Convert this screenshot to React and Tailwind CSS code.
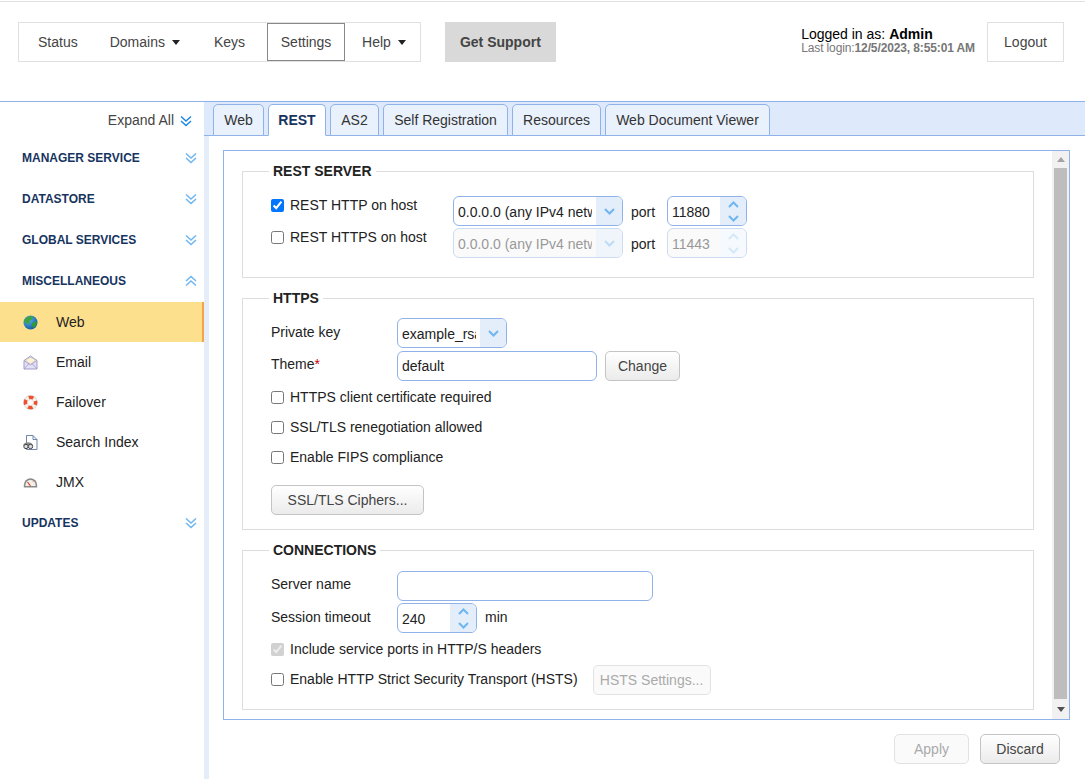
import { useState } from "react";

const sections = ["MANAGER SERVICE", "DATASTORE", "GLOBAL SERVICES"];
const tabs = [
  { label: "Web", width: "w-[51px]" },
  { label: "REST", width: "w-[58px]" },
  { label: "AS2", width: "w-[49px]" },
  { label: "Self Registration", width: "w-[125px]" },
  { label: "Resources", width: "w-[89px]" },
  { label: "Web Document Viewer", width: "w-[165px]" },
];

function Caret() {
  return <span className="ml-[7px] inline-block h-0 w-0 border-x-[4.5px] border-t-[5px] border-x-transparent border-t-[#222]" />;
}

function DoubleChevron({ up, color = "#6db6f2" }) {
  return (
    <svg width="12" height="12" viewBox="0 0 12 12" fill="none" stroke={color} strokeWidth="1.5">
      {up ? (
        <>
          <path d="M1 6 L6 1.5 L11 6" />
          <path d="M1 10.5 L6 6 L11 10.5" />
        </>
      ) : (
        <>
          <path d="M1 1.5 L6 6 L11 1.5" />
          <path d="M1 6 L6 10.5 L11 6" />
        </>
      )}
    </svg>
  );
}

function Chevron({ up, color = "#6db6f2" }) {
  return (
    <svg width="11" height="7" viewBox="0 0 11 7" fill="none" stroke={color} strokeWidth="2">
      <path d={up ? "M1 6 L5.5 1.5 L10 6" : "M1 1 L5.5 5.5 L10 1"} />
    </svg>
  );
}

function GlobeIcon() {
  return (
    <svg width="15" height="15" viewBox="0 0 15 15">
      <defs>
        <radialGradient id="sea" cx="35%" cy="30%" r="75%">
          <stop offset="0%" stopColor="#5fb4ee" />
          <stop offset="100%" stopColor="#0f5a9e" />
        </radialGradient>
      </defs>
      <circle cx="7.5" cy="7.5" r="7" fill="url(#sea)" />
      <path d="M4 2.2 C6 1 8.5 1 10 2 L9 4.5 L6.5 6 L6.5 9 L4 8.5 L1.2 7 C1.3 5 2.5 3.2 4 2.2Z" fill="#3da33c" />
      <path d="M9 8 L13.6 6.5 L14 9 L11 13 L9 11Z" fill="#2f9a3a" />
    </svg>
  );
}

function MailIcon() {
  return (
    <svg width="15" height="15" viewBox="0 0 15 15" fill="none">
      <path d="M1 5.5 L7.5 1 L14 5.5 V14 H1Z" fill="#e4e0f5" stroke="#a19cc9" />
      <path d="M3 6 L3 4.5 L7.5 2.5 L12 4.5 L12 6 L7.5 9Z" fill="#fbf2d8" stroke="#c9bfa0" strokeWidth="0.6" />
      <path d="M1 14 L6 8.5 M14 14 L9 8.5 M1 5.5 L7.5 10 L14 5.5" stroke="#a19cc9" strokeWidth="0.8" />
    </svg>
  );
}

function BuoyIcon() {
  return (
    <svg width="15" height="15" viewBox="0 0 15 15" fill="none">
      <circle cx="7.5" cy="7.5" r="7" fill="#f4f1ec" stroke="#c9c4bd" strokeWidth="0.6" />
      <circle cx="7.5" cy="7.5" r="5" stroke="#ee4f2c" strokeWidth="3.6" strokeDasharray="4.6 3.25" strokeDashoffset="2.3" />
      <circle cx="7.5" cy="7.5" r="2.9" fill="#fff" stroke="#d8cfc6" strokeWidth="0.5" />
    </svg>
  );
}

function SearchDocIcon() {
  return (
    <svg width="15" height="15" viewBox="0 0 15 15" fill="none">
      <path d="M3.5 0.5 H10 L14 4.5 V14.5 H3.5Z" fill="#fff" stroke="#6f86a8" />
      <path d="M10 0.5 V4.5 H14" stroke="#6f86a8" />
      <path d="M0.5 9.5 C2 6.5 8 6.5 9.5 9.5 L9.5 11 L0.5 11Z" fill="#8a8a8a" />
      <circle cx="3" cy="11.5" r="2.2" fill="#d8dde2" stroke="#444" />
      <circle cx="7.5" cy="11.5" r="2.2" fill="#d8dde2" stroke="#444" />
    </svg>
  );
}

function GaugeIcon() {
  return (
    <svg width="15" height="15" viewBox="0 0 15 15" fill="none">
      <path d="M0.8 12.5 V10 A6.7 6.7 0 0 1 14.2 10 V12.5 Z" fill="#8b8b8b" />
      <path d="M2.4 11 V10 A5.1 5.1 0 0 1 12.6 10 V11 Z" fill="#f3f0ea" />
      <path d="M7.5 11 L4.5 7" stroke="#d9432a" strokeWidth="1.2" />
      <path d="M10 6.5 L11 5.5" stroke="#d9432a" strokeWidth="0.8" />
    </svg>
  );
}

const miscItems = [
  { label: "Web", icon: GlobeIcon, active: true },
  { label: "Email", icon: MailIcon },
  { label: "Failover", icon: BuoyIcon },
  { label: "Search Index", icon: SearchDocIcon },
  { label: "JMX", icon: GaugeIcon },
];

function SectionHead({ title, up }) {
  return (
    <div className="flex h-[41px] items-center justify-between pr-[7px] pl-[22px]">
      <span className="text-[12px] font-bold text-[#17345f]">{title}</span>
      <DoubleChevron up={up} />
    </div>
  );
}

function Sidebar() {
  return (
    <aside className="w-[204px] shrink-0 bg-white">
      <div className="flex h-[35px] items-center justify-end pt-[2px] pr-[12px] text-[14px] text-[#444]">
        Expand All
        <span className="ml-[6px] flex">
          <DoubleChevron color="#1e88e5" />
        </span>
      </div>
      {sections.map((s) => (
        <SectionHead key={s} title={s} />
      ))}
      <SectionHead title="MISCELLANEOUS" up />
      <div className="mt-px">
        {miscItems.map((item) => {
          const Icon = item.icon;
          return (
            <div
              key={item.label}
              className={`flex h-[40px] items-center pl-[23px] text-[14px] text-[#222] ${item.active ? "border-r-[2px] border-[#f5a44a] bg-[#fde08d]" : ""}`}
            >
              <span className="mr-[18px] flex w-[15px]">
                <Icon />
              </span>
              {item.label}
            </div>
          );
        })}
      </div>
      <SectionHead title="UPDATES" />
    </aside>
  );
}

function Tabs() {
  const [active, setActive] = useState("REST");
  return (
    <div className="flex h-[34px] shrink-0 items-end gap-[4px] border-b border-[#8fb3e8] bg-[#deeafc] pl-[9px]">
      {tabs.map((t) => (
        <button
          key={t.label}
          onClick={() => setActive(t.label)}
          className={`-mb-px h-[32px] rounded-t-[5px] border border-[#8fb3e8] text-[14px] ${t.width} ${active === t.label ? "border-b-white bg-white font-bold text-[#17345f]" : "bg-[#e9f1fd] text-[#333]"}`}
        >
          {t.label}
        </button>
      ))}
    </div>
  );
}

function Section({ title, className, children }) {
  return (
    <fieldset className={`border border-[#dddddd] px-[28px] ${className}`}>
      <legend className="-ml-[2px] px-[4px] text-[14px] leading-[16px] font-bold text-[#222]">{title}</legend>
      {children}
    </fieldset>
  );
}

function Check({ label, checked, disabled, className = "" }) {
  return (
    <label className={`flex items-center text-[14px] ${className}`}>
      <input type="checkbox" defaultChecked={checked} disabled={disabled} className="m-0 mr-[6px] h-[13px] w-[13px]" />
      {label}
    </label>
  );
}

function SelectBox({ value, width, disabled }) {
  return (
    <div className={`flex h-[30px] overflow-hidden rounded-[6px] border ${disabled ? "border-[#ccdcf3] bg-[#fafafa] text-[#999]" : "border-[#8fb3e8] bg-white text-[#222]"} ${width}`}>
      <div className="min-w-0 flex-1 pr-[4px] pl-[4px]">
        <span className="block overflow-hidden text-[14px] leading-[30px] whitespace-nowrap">{value}</span>
      </div>
      <span className={`flex w-[26px] shrink-0 items-center justify-center ${disabled ? "bg-[#f0f5fc]" : "bg-[#e4eefb]"}`}>
        <Chevron color={disabled ? "#bcdcf6" : "#6db6f2"} />
      </span>
    </div>
  );
}

function Spinner({ value, disabled, className = "" }) {
  return (
    <div className={`flex h-[30px] w-[80px] overflow-hidden rounded-[6px] border ${disabled ? "border-[#ccdcf3] bg-[#fafafa] text-[#999]" : "border-[#8fb3e8] bg-white text-[#222]"} ${className}`}>
      <span className="flex-1 pl-[4px] text-[14px] leading-[30px]">{value}</span>
      <span className={`flex w-[26px] shrink-0 flex-col items-center justify-center gap-[7px] ${disabled ? "bg-[#f6f9fd]" : "bg-[#e4eefb]"}`}>
        <Chevron up color={disabled ? "#d4e8f8" : "#6db6f2"} />
        <Chevron color={disabled ? "#d4e8f8" : "#6db6f2"} />
      </span>
    </div>
  );
}

function Btn({ children, disabled, className = "" }) {
  return (
    <button
      disabled={disabled}
      className={`h-[30px] rounded-[5px] border text-[14px] ${disabled ? "border-[#e2e2e2] bg-[#fafafa] text-[#aaa]" : "border-[#c4c4c4] bg-gradient-to-b from-white to-[#ebebeb] text-[#444]"} ${className}`}
    >
      {children}
    </button>
  );
}

function Scrollbar() {
  return (
    <div className="flex w-[17px] shrink-0 flex-col items-center bg-[#f1f1f1]">
      <div className="flex h-[17px] w-full items-center justify-center">
        <span className="h-0 w-0 border-x-[4px] border-b-[5px] border-x-transparent border-b-[#a3a3a3]" />
      </div>
      <div className="w-[13px] flex-1 bg-[#bdbdbd]" />
      <div className="flex h-[20px] w-full items-center justify-center">
        <span className="h-0 w-0 border-x-[4px] border-t-[5px] border-x-transparent border-t-[#505050]" />
      </div>
    </div>
  );
}

export default function App() {
  return (
    <div className="flex h-screen flex-col overflow-hidden bg-white font-['Liberation_Sans',Arial,sans-serif] text-[#222]">
      <header className="mt-px flex h-[101px] shrink-0 items-start border-t border-b border-t-[#e2e2e2] border-b-[#8fb3e8] pt-[20px] pl-[18px]">
        <nav className="flex h-[40px] items-center border border-[#e0e0e0] text-[14px] text-[#444]">
          <a className="pr-[13px] pl-[19px]">Status</a>
          <a className="flex items-center pr-[15px] pl-[19px]">
            Domains
            <Caret />
          </a>
          <a className="pr-[22px] pl-[19px]">Keys</a>
          <a className="flex h-[38px] w-[78px] items-center justify-center border border-[#888]">Settings</a>
          <a className="flex items-center pr-[14px] pl-[17px]">
            Help
            <Caret />
          </a>
        </nav>
        <button className="ml-[24px] h-[40px] w-[111px] bg-[#d9d9d9] text-[14px] font-bold text-[#444]">Get Support</button>
        <div className="ml-auto pt-[5px] text-[14px] leading-[15px] text-black">
          <p>
            Logged in as: <b>Admin</b>
          </p>
          <p className="text-[12px] leading-[12px] tracking-[-0.12px] text-[#777]">
            Last login:<b>12/5/2023, 8:55:01 AM</b>
          </p>
        </div>
        <button className="mr-[21px] ml-[12px] h-[40px] w-[77px] border border-[#e0e0e0] text-[14px] text-[#444]">Logout</button>
      </header>

      <div className="flex min-h-0 flex-1">
        <Sidebar />
        <main className="flex min-w-0 flex-1 flex-col">
          <Tabs />
          <div className="flex flex-1 flex-col border-l-[5px] border-[#e5edf9] pt-[14px] pr-[15px] pl-[14px]">
            <div className="flex h-[570px] border border-[#8fb3e8] pl-[18px]">
              <div className="flex flex-1 flex-col gap-[12px] pt-[12px] pr-[18px]">
                <Section title="REST SERVER" className="h-[115px]">
                  <div className="flex pt-[17px]">
                    <div className="flex w-[182px] flex-col gap-[16px] pt-[1px]">
                      <Check label="REST HTTP on host" checked className="h-[16px]" />
                      <Check label="REST HTTPS on host" className="h-[16px]" />
                    </div>
                    <div className="flex flex-col gap-[2px]">
                      <div className="flex items-center">
                        <SelectBox value="0.0.0.0 (any IPv4 network)" width="w-[170px]" />
                        <span className="mx-[8px] w-[28px] pt-[2px] text-[14px]">port</span>
                        <Spinner value="11880" />
                      </div>
                      <div className="flex items-center">
                        <SelectBox value="0.0.0.0 (any IPv4 network)" width="w-[170px]" disabled />
                        <span className="mx-[8px] w-[28px] pt-[2px] text-[14px]">port</span>
                        <Spinner value="11443" disabled />
                      </div>
                    </div>
                  </div>
                </Section>

                <Section title="HTTPS" className="h-[240px]">
                  <div className="flex items-center pt-[12px]">
                    <span className="w-[126px] pb-[2px] text-[14px]">Private key</span>
                    <SelectBox value="example_rsa_key" width="w-[110px]" />
                  </div>
                  <div className="mt-[3px] flex items-center">
                    <span className="w-[126px] pb-[4px] text-[14px]">
                      Theme<span className="text-[#c00]">*</span>
                    </span>
                    <input defaultValue="default" className="h-[30px] w-[200px] rounded-[6px] border border-[#8fb3e8] pl-[4px] text-[14px] text-[#222]" />
                    <Btn className="ml-[8px] w-[75px]">Change</Btn>
                  </div>
                  <Check label="HTTPS client certificate required" className="mt-[6px] h-[20px]" />
                  <Check label="SSL/TLS renegotiation allowed" className="mt-[10px] h-[20px]" />
                  <Check label="Enable FIPS compliance" className="mt-[10px] h-[20px]" />
                  <Btn className="mt-[18px] w-[153px]">SSL/TLS Ciphers...</Btn>
                </Section>

                <Section title="CONNECTIONS" className="h-[168px]">
                  <div className="flex items-center pt-[13px]">
                    <span className="w-[126px] pb-[4px] text-[14px]">Server name</span>
                    <input className="h-[30px] w-[256px] rounded-[6px] border border-[#8fb3e8]" />
                  </div>
                  <div className="mt-[2px] flex items-center">
                    <span className="w-[126px] pb-[2px] text-[14px]">Session timeout</span>
                    <Spinner value="240" />
                    <span className="ml-[8px] pb-[2px] text-[14px]">min</span>
                  </div>
                  <Check label="Include service ports in HTTP/S headers" checked disabled className="mt-[6px] h-[20px]" />
                  <div className="mt-[6px] flex items-center">
                    <Check label="Enable HTTP Strict Security Transport (HSTS)" className="h-[30px] pb-[2px]" />
                    <Btn disabled className="ml-[15px] w-[118px]">HSTS Settings...</Btn>
                  </div>
                </Section>
              </div>
              <Scrollbar />
            </div>
            <div className="mt-[14px] flex justify-end gap-[11px] pr-[10px]">
              <Btn disabled className="w-[75px]">Apply</Btn>
              <Btn className="w-[80px] border-[#b5b5b5] text-[#222]">Discard</Btn>
            </div>
          </div>
        </main>
      </div>
    </div>
  );
}
